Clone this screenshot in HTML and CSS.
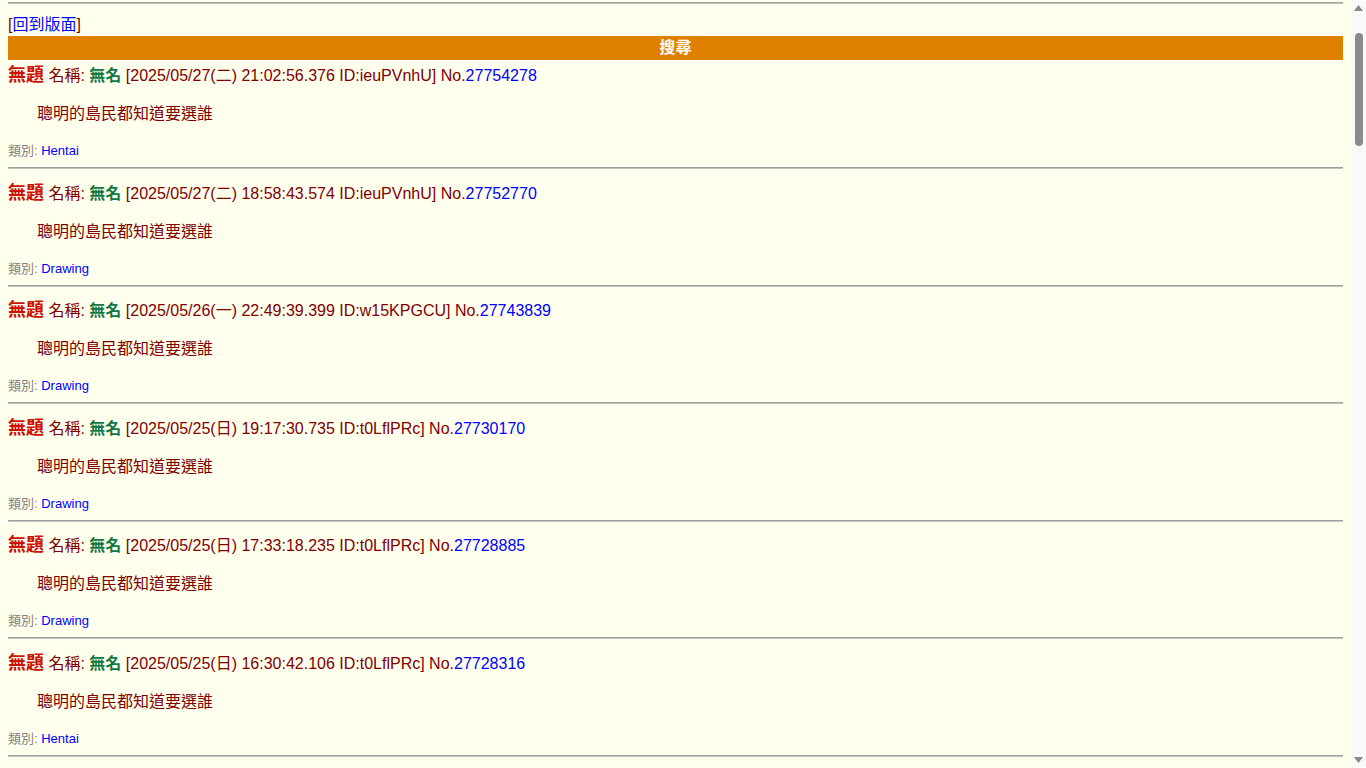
FILE: index.html
```html
<!DOCTYPE html>
<html lang="zh-Hant">
<head>
  <meta charset="UTF-8">
  <meta name="viewport" content="width=device-width, initial-scale=1.0">
  <title>搜尋</title>
  <link rel="stylesheet" href="styles.css">
</head>
<body>
  <hr class="top">
  <div class="back">[<a href="#">回到版面</a>]</div>
  <div class="bar">搜尋</div>

  <div class="post"><div class="head"><span class="title">無題</span> 名稱: <span class="name">無名</span> [2025/05/27(二) 21:02:56.376 ID:ieuPVnhU] No.<a href="#">27754278</a></div><div class="quote">聰明的島民都知道要選誰</div><div class="cat">類別: <a href="#">Hentai</a></div><hr></div>
  <div class="post"><div class="head"><span class="title">無題</span> 名稱: <span class="name">無名</span> [2025/05/27(二) 18:58:43.574 ID:ieuPVnhU] No.<a href="#">27752770</a></div><div class="quote">聰明的島民都知道要選誰</div><div class="cat">類別: <a href="#">Drawing</a></div><hr></div>
  <div class="post"><div class="head"><span class="title">無題</span> 名稱: <span class="name">無名</span> [2025/05/26(一) 22:49:39.399 ID:w15KPGCU] No.<a href="#">27743839</a></div><div class="quote">聰明的島民都知道要選誰</div><div class="cat">類別: <a href="#">Drawing</a></div><hr></div>
  <div class="post"><div class="head"><span class="title">無題</span> 名稱: <span class="name">無名</span> [2025/05/25(日) 19:17:30.735 ID:t0LflPRc] No.<a href="#">27730170</a></div><div class="quote">聰明的島民都知道要選誰</div><div class="cat">類別: <a href="#">Drawing</a></div><hr></div>
  <div class="post"><div class="head"><span class="title">無題</span> 名稱: <span class="name">無名</span> [2025/05/25(日) 17:33:18.235 ID:t0LflPRc] No.<a href="#">27728885</a></div><div class="quote">聰明的島民都知道要選誰</div><div class="cat">類別: <a href="#">Drawing</a></div><hr></div>
  <div class="post"><div class="head"><span class="title">無題</span> 名稱: <span class="name">無名</span> [2025/05/25(日) 16:30:42.106 ID:t0LflPRc] No.<a href="#">27728316</a></div><div class="quote">聰明的島民都知道要選誰</div><div class="cat">類別: <a href="#">Hentai</a></div><hr></div>
  <div class="post"><div class="head"><span class="title">無題</span> 名稱: <span class="name">無名</span> [2025/05/25(日) 11:05:27.512 ID:t0LflPRc] No.<a href="#">27726154</a></div><div class="quote">聰明的島民都知道要選誰</div><div class="cat">類別: <a href="#">Drawing</a></div><hr></div>
  <div class="post"><div class="head"><span class="title">無題</span> 名稱: <span class="name">無名</span> [2025/05/24(六) 23:41:09.087 ID:Xq3mB7aE] No.<a href="#">27721903</a></div><div class="quote">聰明的島民都知道要選誰</div><div class="cat">類別: <a href="#">Drawing</a></div><hr></div>
  <div class="post"><div class="head"><span class="title">無題</span> 名稱: <span class="name">無名</span> [2025/05/24(六) 20:12:55.640 ID:Xq3mB7aE] No.<a href="#">27719488</a></div><div class="quote">聰明的島民都知道要選誰</div><div class="cat">類別: <a href="#">Hentai</a></div><hr></div>
  <div class="post"><div class="head"><span class="title">無題</span> 名稱: <span class="name">無名</span> [2025/05/24(六) 14:37:02.231 ID:Xq3mB7aE] No.<a href="#">27715027</a></div><div class="quote">聰明的島民都知道要選誰</div><div class="cat">類別: <a href="#">Drawing</a></div><hr></div>
  <div class="post"><div class="head"><span class="title">無題</span> 名稱: <span class="name">無名</span> [2025/05/23(五) 22:58:16.904 ID:Kp8sW2dN] No.<a href="#">27709611</a></div><div class="quote">聰明的島民都知道要選誰</div><div class="cat">類別: <a href="#">Drawing</a></div><hr></div>
  <div class="post"><div class="head"><span class="title">無題</span> 名稱: <span class="name">無名</span> [2025/05/23(五) 19:20:43.318 ID:Kp8sW2dN] No.<a href="#">27707284</a></div><div class="quote">聰明的島民都知道要選誰</div><div class="cat">類別: <a href="#">Drawing</a></div><hr></div>
  <div class="post"><div class="head"><span class="title">無題</span> 名稱: <span class="name">無名</span> [2025/05/23(五) 12:06:31.775 ID:Kp8sW2dN] No.<a href="#">27702960</a></div><div class="quote">聰明的島民都知道要選誰</div><div class="cat">類別: <a href="#">Hentai</a></div><hr></div>
  <div class="post"><div class="head"><span class="title">無題</span> 名稱: <span class="name">無名</span> [2025/05/22(四) 23:15:48.129 ID:rZ5vYh1Q] No.<a href="#">27697835</a></div><div class="quote">聰明的島民都知道要選誰</div><div class="cat">類別: <a href="#">Drawing</a></div><hr></div>
  <div class="post"><div class="head"><span class="title">無題</span> 名稱: <span class="name">無名</span> [2025/05/22(四) 21:44:07.563 ID:rZ5vYh1Q] No.<a href="#">27696712</a></div><div class="quote">聰明的島民都知道要選誰</div><div class="cat">類別: <a href="#">Drawing</a></div><hr></div>
  <div class="post"><div class="head"><span class="title">無題</span> 名稱: <span class="name">無名</span> [2025/05/22(四) 17:29:39.046 ID:rZ5vYh1Q] No.<a href="#">27693820</a></div><div class="quote">聰明的島民都知道要選誰</div><div class="cat">類別: <a href="#">Drawing</a></div><hr></div>
  <div class="post"><div class="head"><span class="title">無題</span> 名稱: <span class="name">無名</span> [2025/05/21(三) 22:03:12.881 ID:Lm2cT9gA] No.<a href="#">27685407</a></div><div class="quote">聰明的島民都知道要選誰</div><div class="cat">類別: <a href="#">Hentai</a></div><hr></div>
  <div class="post"><div class="head"><span class="title">無題</span> 名稱: <span class="name">無名</span> [2025/05/21(三) 18:51:26.397 ID:Lm2cT9gA] No.<a href="#">27683141</a></div><div class="quote">聰明的島民都知道要選誰</div><div class="cat">類別: <a href="#">Drawing</a></div><hr></div>
  <div class="post"><div class="head"><span class="title">無題</span> 名稱: <span class="name">無名</span> [2025/05/21(三) 13:22:58.620 ID:Lm2cT9gA] No.<a href="#">27679566</a></div><div class="quote">聰明的島民都知道要選誰</div><div class="cat">類別: <a href="#">Drawing</a></div><hr></div>
  <div class="post"><div class="head"><span class="title">無題</span> 名稱: <span class="name">無名</span> [2025/05/20(二) 23:37:44.215 ID:Vb7nF4sK] No.<a href="#">27673928</a></div><div class="quote">聰明的島民都知道要選誰</div><div class="cat">類別: <a href="#">Drawing</a></div><hr></div>
  <div class="post"><div class="head"><span class="title">無題</span> 名稱: <span class="name">無名</span> [2025/05/20(二) 20:09:03.738 ID:Vb7nF4sK] No.<a href="#">27671340</a></div><div class="quote">聰明的島民都知道要選誰</div><div class="cat">類別: <a href="#">Hentai</a></div><hr></div>
  <div class="post"><div class="head"><span class="title">無題</span> 名稱: <span class="name">無名</span> [2025/05/20(二) 15:46:19.452 ID:Vb7nF4sK] No.<a href="#">27668075</a></div><div class="quote">聰明的島民都知道要選誰</div><div class="cat">類別: <a href="#">Drawing</a></div><hr></div>
  <div class="post"><div class="head"><span class="title">無題</span> 名稱: <span class="name">無名</span> [2025/05/19(一) 22:28:35.906 ID:Hd4pQ8wE] No.<a href="#">27661592</a></div><div class="quote">聰明的島民都知道要選誰</div><div class="cat">類別: <a href="#">Drawing</a></div><hr></div>
  <div class="post"><div class="head"><span class="title">無題</span> 名稱: <span class="name">無名</span> [2025/05/19(一) 19:54:50.184 ID:Hd4pQ8wE] No.<a href="#">27659830</a></div><div class="quote">聰明的島民都知道要選誰</div><div class="cat">類別: <a href="#">Drawing</a></div><hr></div>
  <div class="post"><div class="head"><span class="title">無題</span> 名稱: <span class="name">無名</span> [2025/05/19(一) 11:13:27.667 ID:Hd4pQ8wE] No.<a href="#">27654417</a></div><div class="quote">聰明的島民都知道要選誰</div><div class="cat">類別: <a href="#">Hentai</a></div><hr></div>
  <div class="post"><div class="head"><span class="title">無題</span> 名稱: <span class="name">無名</span> [2025/05/18(日) 23:02:41.039 ID:gT6xR3mZ] No.<a href="#">27648206</a></div><div class="quote">聰明的島民都知道要選誰</div><div class="cat">類別: <a href="#">Drawing</a></div><hr></div>
  <div class="post"><div class="head"><span class="title">無題</span> 名稱: <span class="name">無名</span> [2025/05/18(日) 18:35:14.572 ID:gT6xR3mZ] No.<a href="#">27645119</a></div><div class="quote">聰明的島民都知道要選誰</div><div class="cat">類別: <a href="#">Drawing</a></div><hr></div>
  <div class="post"><div class="head"><span class="title">無題</span> 名稱: <span class="name">無名</span> [2025/05/18(日) 10:48:56.813 ID:gT6xR3mZ] No.<a href="#">27640373</a></div><div class="quote">聰明的島民都知道要選誰</div><div class="cat">類別: <a href="#">Drawing</a></div><hr></div>
  <div class="post"><div class="head"><span class="title">無題</span> 名稱: <span class="name">無名</span> [2025/05/17(六) 22:19:08.296 ID:Yc1kU5bH] No.<a href="#">27634758</a></div><div class="quote">聰明的島民都知道要選誰</div><div class="cat">類別: <a href="#">Hentai</a></div><hr></div>
  <div class="post"><div class="head"><span class="title">無題</span> 名稱: <span class="name">無名</span> [2025/05/17(六) 17:57:33.741 ID:Yc1kU5bH] No.<a href="#">27631204</a></div><div class="quote">聰明的島民都知道要選誰</div><div class="cat">類別: <a href="#">Drawing</a></div><hr></div>
  <div class="post"><div class="head"><span class="title">無題</span> 名稱: <span class="name">無名</span> [2025/05/17(六) 12:31:22.158 ID:Yc1kU5bH] No.<a href="#">27627690</a></div><div class="quote">聰明的島民都知道要選誰</div><div class="cat">類別: <a href="#">Drawing</a></div><hr></div>
  <div class="post"><div class="head"><span class="title">無題</span> 名稱: <span class="name">無名</span> [2025/05/16(五) 23:44:47.603 ID:Nw9eJ2rL] No.<a href="#">27622045</a></div><div class="quote">聰明的島民都知道要選誰</div><div class="cat">類別: <a href="#">Drawing</a></div><hr></div>
  <div class="post"><div class="head"><span class="title">無題</span> 名稱: <span class="name">無名</span> [2025/05/16(五) 20:26:11.924 ID:Nw9eJ2rL] No.<a href="#">27619831</a></div><div class="quote">聰明的島民都知道要選誰</div><div class="cat">類別: <a href="#">Hentai</a></div><hr></div>
  <div class="post"><div class="head"><span class="title">無題</span> 名稱: <span class="name">無名</span> [2025/05/16(五) 14:08:39.377 ID:Nw9eJ2rL] No.<a href="#">27615462</a></div><div class="quote">聰明的島民都知道要選誰</div><div class="cat">類別: <a href="#">Drawing</a></div><hr></div>
  <div class="post"><div class="head"><span class="title">無題</span> 名稱: <span class="name">無名</span> [2025/05/15(四) 22:51:05.810 ID:Pf3aD7vM] No.<a href="#">27609377</a></div><div class="quote">聰明的島民都知道要選誰</div><div class="cat">類別: <a href="#">Drawing</a></div><hr></div>
  <div class="post"><div class="head"><span class="title">無題</span> 名稱: <span class="name">無名</span> [2025/05/15(四) 19:33:28.465 ID:Pf3aD7vM] No.<a href="#">27607106</a></div><div class="quote">聰明的島民都知道要選誰</div><div class="cat">類別: <a href="#">Drawing</a></div><hr></div>
  <div class="post"><div class="head"><span class="title">無題</span> 名稱: <span class="name">無名</span> [2025/05/15(四) 13:17:54.092 ID:Pf3aD7vM] No.<a href="#">27603258</a></div><div class="quote">聰明的島民都知道要選誰</div><div class="cat">類別: <a href="#">Hentai</a></div><hr></div>
  <div class="post"><div class="head"><span class="title">無題</span> 名稱: <span class="name">無名</span> [2025/05/14(三) 23:05:16.538 ID:Ue8hS4cT] No.<a href="#">27597914</a></div><div class="quote">聰明的島民都知道要選誰</div><div class="cat">類別: <a href="#">Drawing</a></div><hr></div>
  <div class="post"><div class="head"><span class="title">無題</span> 名稱: <span class="name">無名</span> [2025/05/14(三) 18:42:37.271 ID:Ue8hS4cT] No.<a href="#">27594650</a></div><div class="quote">聰明的島民都知道要選誰</div><div class="cat">類別: <a href="#">Drawing</a></div><hr></div>
  <div class="post"><div class="head"><span class="title">無題</span> 名稱: <span class="name">無名</span> [2025/05/14(三) 12:59:02.845 ID:Ue8hS4cT] No.<a href="#">27590123</a></div><div class="quote">聰明的島民都知道要選誰</div><div class="cat">類別: <a href="#">Drawing</a></div><hr></div>
  <div class="post"><div class="head"><span class="title">無題</span> 名稱: <span class="name">無名</span> [2025/05/13(二) 22:36:48.617 ID:Ae5tG1yP] No.<a href="#">27584390</a></div><div class="quote">聰明的島民都知道要選誰</div><div class="cat">類別: <a href="#">Hentai</a></div><hr></div>
  <div class="post"><div class="head"><span class="title">無題</span> 名稱: <span class="name">無名</span> [2025/05/13(二) 17:10:25.903 ID:Ae5tG1yP] No.<a href="#">27581066</a></div><div class="quote">聰明的島民都知道要選誰</div><div class="cat">類別: <a href="#">Drawing</a></div><hr></div>

  <!-- window scrollbar, drawn by hand since the browser hides its own -->
  <div class="scrollbar">
    <svg class="arrow" width="9" height="6" viewBox="0 0 9 6"><path d="M4.5 0 9 6H0z" fill="#878787"/></svg>
    <div class="thumb"></div>
    <svg class="arrow down" width="9" height="6" viewBox="0 0 9 6"><path d="M0 0h9L4.5 6z" fill="#878787"/></svg>
  </div>
</body>
</html>
```

FILE: styles.css
```css
body {
  margin: 0;
  padding: 0 23px 0 8px;
  background: #ffffee;
  color: #800000;
  font-family: "Liberation Sans", Arial, "Noto Sans CJK TC", sans-serif;
  font-size: 16px;
}
a {
  color: #0000ff;
  text-decoration: none;
}
hr {
  height: 0;
  border: none;
  border-top: 1px solid #a0a0a0;
  border-bottom: 1px solid #c4c4bc;
}
hr.top {
  margin: 2px 0 0;
}
.back {
  margin-top: 11px;
  height: 20px;
  line-height: 20px;
}
.bar {
  margin-top: 1px;
  margin-bottom: 5px;
  height: 24px;
  line-height: 24px;
  background: #e08000;
  color: #ffffff;
  font-weight: bold;
  text-align: center;
}
.head {
  height: 20px;
  line-height: 20px;
  white-space: nowrap;
}
.title {
  color: #cc1105;
  font-size: 18px;
  font-weight: bold;
}
.name {
  color: #117743;
  font-weight: bold;
}
.quote {
  margin: 19px 0 0 29px;
  height: 20px;
  line-height: 20px;
}
.cat {
  margin-top: 19px;
  height: 16px;
  line-height: 16px;
  font-size: 13px;
  color: #808080;
}
.post hr {
  margin: 8px 0 13.6px;
}
.scrollbar {
  position: fixed;
  top: 0;
  right: 0;
  width: 15px;
  height: 100vh;
  background: #f9f9f9;
  display: flex;
  flex-direction: column;
  align-items: center;
}
.arrow {
  display: block;
  margin-top: 5px;
}
.arrow.down {
  margin-top: auto;
  margin-bottom: 5px;
}
.thumb {
  margin-top: 22px;
  width: 8px;
  height: 113px;
  border-radius: 4px;
  background: #8b8b8b;
}
```
